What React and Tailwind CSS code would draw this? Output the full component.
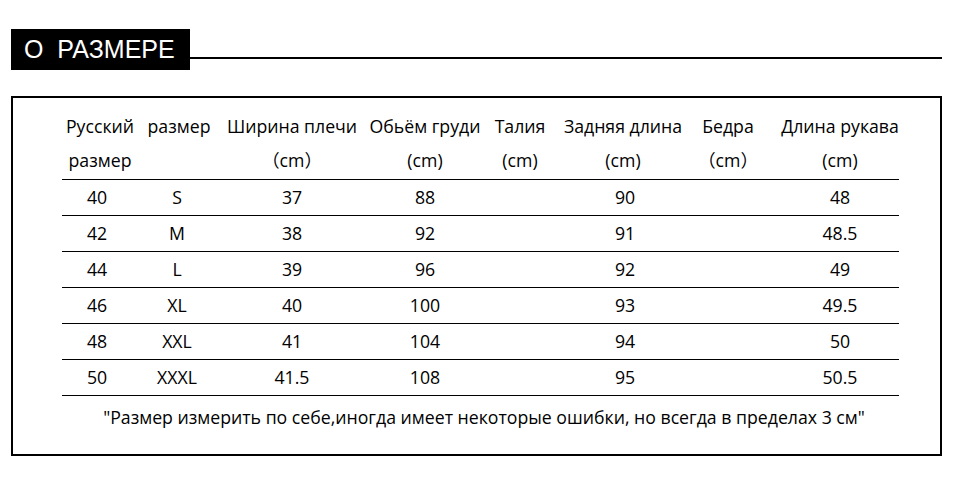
const font = { fontFamily: '"Open Sans", "Noto Sans CJK SC", sans-serif' };

const cols = [
  "w-[76px]",
  "w-[82px]",
  "w-[144px]",
  "w-[122px]",
  "w-[68px]",
  "w-[138px]",
  "w-[72px]",
  "w-[135px] pl-[17px]",
];

// у строк с данными первые две колонки чуть левее заголовка
const dataCols = [
  "w-[76px] pr-[6px]",
  "w-[82px] pr-[4px]",
  "w-[144px]",
  "w-[122px]",
  "w-[68px]",
  "w-[138px] pl-[4px]",
  "w-[72px]",
  "w-[135px] pl-[17px]",
];

const head1 = ["Русский", "размер", "Ширина плечи", "Обьём груди", "Талия", "Задняя длина", "Бедра", "Длина рукава"];
const head2 = ["размер", "", "（cm）", "(cm)", "(cm)", "(cm)", "（cm）", "(cm)"];

const rows = [
  ["40", "S", "37", "88", "", "90", "", "48"],
  ["42", "M", "38", "92", "", "91", "", "48.5"],
  ["44", "L", "39", "96", "", "92", "", "49"],
  ["46", "XL", "40", "100", "", "93", "", "49.5"],
  ["48", "XXL", "41", "104", "", "94", "", "50"],
  ["50", "XXXL", "41.5", "108", "", "95", "", "50.5"],
];

function Row({ cells, widths, className }) {
  return (
    <div className={"flex items-center " + className}>
      {cells.map((c, i) => (
        <div key={i} className={"shrink-0 text-center whitespace-nowrap " + widths[i]}>
          {c}
        </div>
      ))}
    </div>
  );
}

export default function App() {
  return (
    <div className="w-[960px] h-[500px] bg-white text-black" style={font}>
      {/* заголовок */}
      <div className="flex items-start pt-[29px] pl-[11px] pr-[18px]">
        <div
          className="h-[41px] w-[179px] bg-black text-white text-[25px] leading-[41px] pl-[13px] shrink-0"
          style={{ fontFamily: '"Liberation Sans", Arial, sans-serif' }}
        >
          О&nbsp;&nbsp;РАЗМЕРЕ
        </div>
        <div className="flex-1 h-[2px] mt-[28px] bg-black"></div>
      </div>

      {/* таблица */}
      <div className="mt-[26px] ml-[11px] w-[931px] h-[360px] border-2 border-black pl-[49px] pt-[11px]">
        <div className="w-[837px] text-[17.7px]">
          <Row cells={head1} widths={cols} className="h-[34px]" />
          <Row cells={head2} widths={cols} className="h-[34px]" />
          <div className="h-[2px] border-b border-black box-content"></div>
          {rows.map((r, i) => (
            <Row key={i} cells={r} widths={dataCols} className="h-[36px] border-b border-black" />
          ))}
          <div className="h-[42px] flex items-center justify-center pl-[7px] whitespace-nowrap">
            "Размер измерить по себе,иногда имеет некоторые ошибки, но всегда в пределах 3 см"
          </div>
        </div>
      </div>
    </div>
  );
}
